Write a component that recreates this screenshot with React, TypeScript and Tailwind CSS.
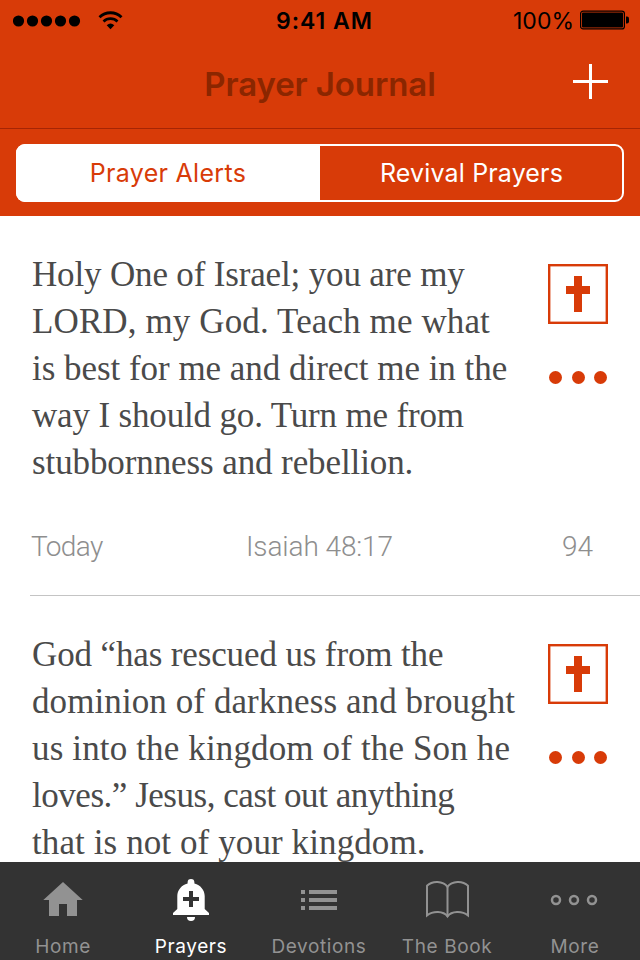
import { ReactNode } from "react";

type Line = { text: string; tracking: string };

type Prayer = {
    id: number;
    lines: Line[];
    meta?: { date: string; verse: string; count: number };
};

const PRAYERS: Prayer[] = [
    {
        id: 1,
        lines: [
            { text: "Holy One of Israel; you are my", tracking: "tracking-[-0.16px]" },
            { text: "LORD, my God. Teach me what", tracking: "tracking-[0.12px]" },
            { text: "is best for me and direct me in the", tracking: "tracking-[-0.03px]" },
            { text: "way I should go. Turn me from", tracking: "tracking-[-0.16px]" },
            { text: "stubbornness and rebellion.", tracking: "tracking-[-0.1px]" },
        ],
        meta: { date: "Today", verse: "Isaiah 48:17", count: 94 },
    },
    {
        id: 2,
        lines: [
            { text: "God “has rescued us from the", tracking: "tracking-[-0.13px]" },
            { text: "dominion of darkness and brought", tracking: "tracking-[0.09px]" },
            { text: "us into the kingdom of the Son he", tracking: "tracking-[0.14px]" },
            { text: "loves.” Jesus, cast out anything", tracking: "tracking-[-0.47px]" },
            { text: "that is not of your kingdom.", tracking: "tracking-[0.1px]" },
        ],
    },
];

function StatusBar() {
    return (
        <div className="grid h-10 grid-cols-3 items-center pl-[13px] pr-[11px] pt-px text-[23px] leading-none text-black">
            <div className="flex items-center">
                <svg width="68" height="12" viewBox="0 0 68 12" fill="currentColor">
                    <circle cx="5.5" cy="6" r="5.6" />
                    <circle cx="19.5" cy="6" r="5.6" />
                    <circle cx="33.5" cy="6" r="5.6" />
                    <circle cx="47.5" cy="6" r="5.6" />
                    <circle cx="61.5" cy="6" r="5.6" />
                </svg>
                <svg className="-mt-px ml-[17px]" width="25" height="19" viewBox="0 0 25 19" fill="none" stroke="currentColor">
                    <path d="M1.5 6.3a15.6 15.6 0 0 1 22 0" strokeWidth="2.8" />
                    <path d="M5.5 10.5a10 10 0 0 1 14 0" strokeWidth="2.6" />
                    <path d="M12.5 18.2l-3.8-4a5.8 5.8 0 0 1 7.6 0z" fill="currentColor" stroke="none" />
                </svg>
            </div>
            <div className="pl-[7px] pt-px text-center font-semibold tracking-[1px]">9:41 AM</div>
            <div className="flex items-center justify-end">
                <span className="pt-px">100%</span>
                <svg className="-mt-px ml-[6px]" width="49" height="20" viewBox="0 0 49 20">
                    <rect x="0.6" y="1.1" width="43.8" height="17.8" rx="2.5" fill="none" stroke="#000" strokeWidth="1.2" />
                    <rect x="2" y="2.5" width="41" height="15" rx="1" fill="#000" />
                    <path d="M46 6.5h1a2 2 0 0 1 2 2v3a2 2 0 0 1-2 2h-1z" fill="#000" />
                </svg>
            </div>
        </div>
    );
}

function PrayerCard({ prayer }: { prayer: Prayer }) {
    return (
        <article className="h-[380px] shrink-0 pl-[30px]">
            <div className="h-full border-b border-[#c4c4c4] pl-[2px]">
                <div className="flex justify-between pr-8">
                    <div className="pt-[35px] font-['Liberation_Serif',serif] text-[35px] leading-[47px] text-[#4a4a4a]">
                        {prayer.lines.map((line) => (
                            <p key={line.text} className={`whitespace-nowrap ${line.tracking}`}>
                                {line.text}
                            </p>
                        ))}
                    </div>
                    <div className="flex flex-col items-center pt-12 text-[#d83b08]">
                        <svg width="60" height="60" viewBox="0 0 60 60" fill="none" stroke="currentColor">
                            <rect x="1.2" y="1.2" width="57.6" height="57.6" strokeWidth="2.4" />
                            <path d="M26 12h8v10h8v8h-8v18h-8V30h-8v-8h8z" fill="currentColor" stroke="none" />
                        </svg>
                        <div className="mt-[47px] flex gap-[9.5px]">
                            <span className="size-[13px] rounded-full bg-current" />
                            <span className="size-[13px] rounded-full bg-current" />
                            <span className="size-[13px] rounded-full bg-current" />
                        </div>
                    </div>
                </div>
                {prayer.meta && (
                    <div className="mt-[45px] grid grid-cols-3 pr-[47px] font-['Roboto',sans-serif] text-[28px] font-light leading-8 text-[#8e8e8e]">
                        <span className="-ml-px tracking-[-0.6px]">{prayer.meta.date}</span>
                        <span className="whitespace-nowrap pl-[14px] text-center tracking-[-0.1px]">{prayer.meta.verse}</span>
                        <span className="text-right">{prayer.meta.count}</span>
                    </div>
                )}
            </div>
        </article>
    );
}

function Tab({ label, active, children }: { label: string; active?: boolean; children: ReactNode }) {
    return (
        <button className={`flex flex-1 flex-col items-center ${active ? "text-white" : "text-[#929292]"}`}>
            <span className="flex h-[73px] items-center justify-center pb-px">{children}</span>
            <span className="whitespace-nowrap text-[19px] leading-6 tracking-[0.6px]">{label}</span>
        </button>
    );
}

function TabBar() {
    return (
        <nav className="-ml-px flex h-[98px] shrink-0 bg-[#333] pr-px">
            <Tab label="Home">
                <svg width="40" height="34" viewBox="0 0 40 34" fill="currentColor" className="mt-[2px]">
                    <path d="M20 0l19.7 18H34v16H24V22h-8v12H6V18H.3z" />
                </svg>
            </Tab>
            <Tab label="Prayers" active>
                <svg width="38" height="44" viewBox="0 0 38 44" className="mt-[4px]">
                    <path
                        d="M19 1a3.4 3.4 0 0 1 3.4 3.4v1C28.5 7 32.7 12 32.7 18v13l4.3 4v2H1v-2l4.3-4V18c0-6 4.2-11 10.3-12.6v-1A3.4 3.4 0 0 1 19 1z"
                        fill="currentColor"
                    />
                    <path d="M15 39h8a4 4 0 0 1-8 0z" fill="currentColor" />
                    <path d="M19 13v16M11 21h16" stroke="#333" strokeWidth="4" />
                </svg>
            </Tab>
            <Tab label="Devotions">
                <svg width="36" height="20" viewBox="0 0 36 20" fill="currentColor" className="mt-[4px]">
                    <path d="M0 0h4v4H0zM8 0h28v4H8zM0 8h4v4H0zM8 8h28v4H8zM0 16h4v4H0zM8 16h28v4H8z" />
                </svg>
            </Tab>
            <Tab label="The Book">
                <svg width="44" height="38" viewBox="0 0 44 38" fill="none" stroke="currentColor" strokeWidth="2" className="mt-[4px]">
                    <path d="M22.5 5.8C18-.2 7.5-.6 2 4.8V34.5C8 29.6 18.5 29.8 22.5 35.5C26.5 29.8 37 29.6 43 34.5V4.8C37.5-.6 27-.2 22.5 5.8z" />
                    <path d="M22.5 5.8v30" />
                </svg>
            </Tab>
            <Tab label="More">
                <svg width="50" height="12" viewBox="0 0 50 12" fill="none" stroke="currentColor" strokeWidth="2.5" className="mt-[4px]">
                    <circle cx="6" cy="6" r="4" />
                    <circle cx="24" cy="6" r="4" />
                    <circle cx="42" cy="6" r="4" />
                </svg>
            </Tab>
        </nav>
    );
}

export default function App() {
    return (
        <div className="flex h-[960px] w-[640px] flex-col overflow-hidden bg-white font-['Inter',sans-serif]">
            <header className="h-[216px] shrink-0 bg-[#d83b08]">
                <StatusBar />
                <div className="grid h-[89px] grid-cols-[1fr_auto_1fr] items-center border-b border-[#a52505] pr-8">
                    <h1 className="col-start-2 pl-8 pt-[2px] text-[33px] font-semibold tracking-[-0.1px] text-[#8b2600]">Prayer Journal</h1>
                    <button className="justify-self-end text-white">
                        <svg width="35" height="35" viewBox="0 0 35 35" stroke="currentColor" strokeWidth="3" className="-mt-[6px]">
                            <path d="M17.5 0v35M0 17.5h35" />
                        </svg>
                    </button>
                </div>
                <div className="mx-4 mt-[15px] grid h-[58px] grid-cols-2 rounded-[9px] border-2 border-white text-[25px]">
                    <button className="-my-0.5 -ml-0.5 rounded-l-[9px] bg-white pt-[2px] tracking-[0.3px] text-[#d83b08]">Prayer Alerts</button>
                    <button className="pl-px pt-[2px] tracking-[0.15px] text-white">Revival Prayers</button>
                </div>
            </header>

            <main className="flex min-h-0 flex-1 flex-col overflow-hidden">
                {PRAYERS.map((prayer) => (
                    <PrayerCard key={prayer.id} prayer={prayer} />
                ))}
            </main>

            <TabBar />
        </div>
    );
}
